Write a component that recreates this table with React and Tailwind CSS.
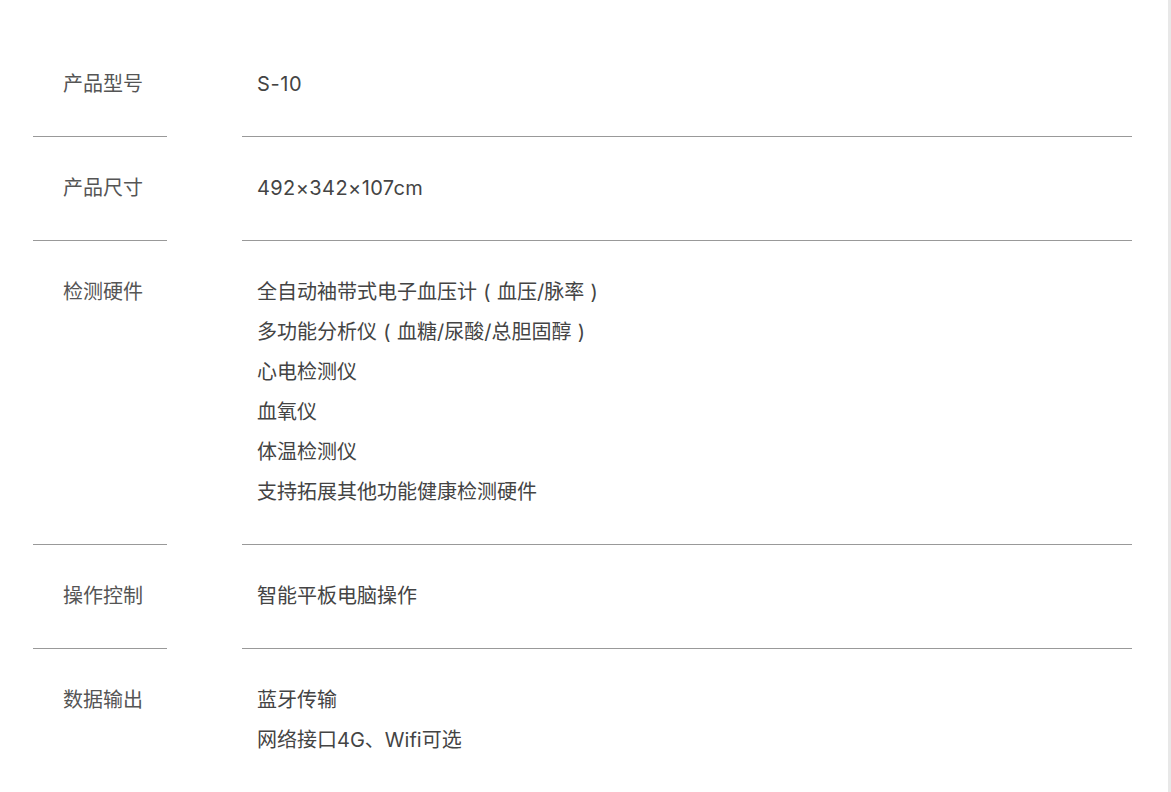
function P({ c }) {
  return <span className="inline-block w-[20px] text-center">{c}</span>;
}

export default function App() {
  const rows = [
    { label: "产品型号", values: [<span className="tracking-[0.6px]">S-10</span>] },
    { label: "产品尺寸", values: [<span className="tracking-[0.4px]">492×342×107cm</span>] },
    {
      label: "检测硬件",
      values: [
        <>全自动袖带式电子血压计<P c="(" />血压/脉率<P c=")" /></>,
        <>多功能分析仪<P c="(" />血糖/尿酸/总胆固醇<P c=")" /></>,
        "心电检测仪",
        "血氧仪",
        "体温检测仪",
        "支持拓展其他功能健康检测硬件",
      ],
    },
    { label: "操作控制", values: ["智能平板电脑操作"] },
    { label: "数据输出", values: ["蓝牙传输", "网络接口4G、Wifi可选"] },
  ];
  return (
    <div
      className="flex w-[1171px] h-[792px] overflow-hidden bg-white text-[20px] text-[#444]"
      style={{ fontFamily: 'Inter, "Noto Sans CJK SC", "Noto Sans", sans-serif' }}
    >
      <div className="flex-1 pt-[33px] pl-[33px] pr-[36px]">
        {rows.map((r, i) => (
          <div key={i} className="flex gap-[75px]">
            <div className="w-[134px] shrink-0 border-b border-[#999] pl-[30px] pt-[31px] pb-[32px] leading-[40px] text-[#555]">
              {r.label}
            </div>
            <div className="flex-1 border-b border-[#999] pl-[15px] pt-[31px] pb-[32px] leading-[40px]">
              {r.values.map((v, j) => (
                <div key={j}>{v}</div>
              ))}
            </div>
          </div>
        ))}
      </div>
      <div className="w-[3px] bg-[#e8e8e8]" />
    </div>
  );
}
